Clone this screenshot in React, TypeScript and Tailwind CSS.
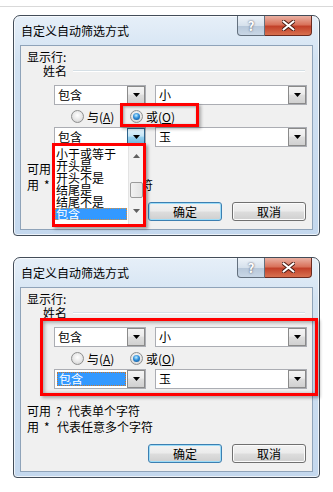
import type { ReactNode } from "react";

function Arrow({ color = "#000" }: { color?: string }) {
  return (
    <svg width="7" height="4" viewBox="0 0 7 4">
      <path d="M0 0h7L3.5 4z" fill={color} />
    </svg>
  );
}

function Combo({
  text,
  className,
  pressed = false,
  selected = false,
}: {
  text: string;
  className: string;
  pressed?: boolean;
  selected?: boolean;
}) {
  return (
    <div className={`flex h-[20px] border border-[#abadb3] bg-white ${className}`}>
      <div className="flex flex-1 items-center py-[2px] pl-[2px] pr-[1px]">
        {selected ? (
          <span className="flex h-full w-full items-center border border-dotted border-[#c9782c] bg-[#3399ff] pl-px text-white">
            {text}
          </span>
        ) : (
          <span className="pl-px">{text}</span>
        )}
      </div>
      <div
        className={
          pressed
            ? "flex w-[18px] items-center justify-center border border-[#2c628b] bg-[linear-gradient(to_bottom,#e5f4fc_0%,#c4e5f6_45%,#98d1ef_50%,#68b3db_100%)]"
            : "flex w-[18px] items-center justify-center border border-[#8a8a8a] bg-[linear-gradient(to_bottom,#f4f4f4_0%,#ececec_45%,#dedede_50%,#d0d0d0_100%)]"
        }
      >
        <Arrow />
      </div>
    </div>
  );
}

function Radio({ checked = false }: { checked?: boolean }) {
  return (
    <span className="flex h-[13px] w-[13px] shrink-0 items-center justify-center rounded-full border border-[#8e8f8f] bg-[radial-gradient(circle_at_50%_40%,#ffffff,#e6e6e6_55%,#c6c6c6)]">
      {checked && (
        <span className="h-[7px] w-[7px] rounded-full bg-[radial-gradient(circle_at_45%_35%,#c2f0ff,#2f8edb_45%,#0b457f)]" />
      )}
    </span>
  );
}

function WinButton({ children, primary = false }: { children: ReactNode; primary?: boolean }) {
  return (
    <div
      className={`flex h-[19px] w-[74px] items-center justify-center rounded-[3px] border bg-[linear-gradient(to_bottom,#f2f2f2_0%,#ebebeb_48%,#dddddd_52%,#cfcfcf_100%)] ${
        primary
          ? "border-[#3c7fb1] shadow-[inset_0_0_0_1px_#9cdcf8]"
          : "border-[#707070] shadow-[inset_0_0_0_1px_#fbfbfb]"
      }`}
    >
      {children}
    </div>
  );
}

const listItems = ["小于或等于", "开头是", "开头不是", "结尾是", "结尾不是", "包含"];

function DropList() {
  return (
    <div className="absolute left-[38px] top-[127px] flex h-[84px] w-[94px] border-[3px] border-[#ff0000] bg-white shadow-[2px_2px_3px_rgba(0,0,0,0.35)]">
      <div className="flex flex-1 flex-col overflow-hidden pt-[2px] pr-px">
        {listItems.map((item, i) =>
          i === listItems.length - 1 ? (
            <div
              key={item}
              className="h-[12px] shrink-0 border border-dotted border-[#d9903a] bg-[#3399ff] leading-[10px] text-white"
            >
              {item}
            </div>
          ) : (
            <div key={item} className="h-[12px] shrink-0 pl-px">
              {item}
            </div>
          ),
        )}
      </div>
      <div className="flex w-[15px] flex-col items-center border-l border-[#e3e3e3] bg-[#f2f2f2]">
        <div className="mt-[8px] rotate-180">
          <Arrow color="#606060" />
        </div>
        <div className="mt-[24px] h-[16px] w-[13px] rounded-[2px] border border-[#9b9b9b] bg-[linear-gradient(to_right,#f2f2f2,#e2e2e2)]" />
        <div className="mt-[11px]">
          <Arrow color="#606060" />
        </div>
      </div>
    </div>
  );
}

function Dialog({ variant }: { variant: 1 | 2 }) {
  return (
    <div className="relative flex h-[221px] w-[307px] flex-col rounded-t-[7px] rounded-b-[4px] border border-[#434d59] bg-[linear-gradient(to_bottom,#e6eff8_0%,#d2e2f2_20%,#c4d8ee_100%)] shadow-[inset_0_0_0_1px_rgba(255,255,255,0.7)]">
      <div className="flex h-[29px] shrink-0 items-start">
        <span className="pl-[7px] pt-[9px]">自定义自动筛选方式</span>
        <div className="ml-auto mr-[7px] flex">
          <div className="flex h-[20px] w-[28px] items-center justify-center rounded-bl-[4px] border border-t-0 border-[#63707e] bg-[linear-gradient(to_bottom,#eef3f9_0%,#d6e1ec_50%,#b8c8da_55%,#c9d7e6_100%)] text-[13px] font-bold text-white [text-shadow:0_0_2px_#334]">
            ?
          </div>
          <div className="flex h-[20px] w-[47px] items-center justify-center rounded-br-[4px] border border-l-0 border-t-0 border-[#6b2a1f] bg-[linear-gradient(to_bottom,#eab1a3_0%,#d9735c_45%,#c2412a_55%,#d8704f_100%)]">
            <svg width="13" height="11" viewBox="0 0 13 11">
              <path
                d="M1.5 1.5l10 8M11.5 1.5l-10 8"
                stroke="#4a1a12"
                strokeWidth="4"
                strokeLinecap="round"
              />
              <path d="M1.5 1.5l10 8M11.5 1.5l-10 8" stroke="#ffffff" strokeWidth="2.2" strokeLinecap="round" />
            </svg>
          </div>
        </div>
      </div>

      <div className="mx-[6px] mb-[5px] flex flex-1 flex-col border border-[#8fa3b9] bg-[#f0f0f0]">
        <div className="ml-[6px] mt-[5px] h-[12px]">显示行:</div>
        <div className="ml-[22px] mr-[7px] mt-[2px] flex h-[12px] items-center gap-[6px]">
          <span>姓名</span>
          <div className="h-[2px] flex-1 border-t border-b border-t-[#d5dfe5] border-b-white" />
        </div>
        <div className="ml-[33px] mt-[8px] flex gap-[9px]">
          <Combo text="包含" className="w-[92px]" />
          <Combo text="小" className="w-[152px]" />
        </div>
        <div className="ml-[50px] mt-[5px] flex h-[13px] items-center">
          <div className="flex w-[59px] items-center gap-[3px]">
            <Radio />
            <span>
              与(<span className="underline">A</span>)
            </span>
          </div>
          <div className="flex items-center gap-[3px]">
            <Radio checked />
            <span>
              或(<span className="underline">O</span>)
            </span>
          </div>
        </div>
        <div className="ml-[33px] mt-[4px] flex gap-[9px]">
          <Combo text="包含" className="w-[92px]" pressed={variant === 1} selected={variant === 2} />
          <Combo text="玉" className="w-[152px]" />
        </div>
        <div className="ml-[6px] mt-[16px] flex h-[12px]">
          <span>可用</span>
          <span className="ml-[5px] w-[7px]">?</span>
          <span className="ml-[5px]">代表单个字符</span>
        </div>
        <div className="ml-[6px] mt-[4px] flex h-[12px]">
          <span>用</span>
          <span className="ml-[5px] w-[7px]">*</span>
          <span className="ml-[6px]">代表任意多个字符</span>
        </div>
        <div className="ml-[127px] mt-[11px] flex gap-[10px]">
          <WinButton primary>确定</WinButton>
          <WinButton>取消</WinButton>
        </div>
      </div>

      {variant === 1 ? (
        <>
          <div className="absolute left-[106px] top-[87px] h-[24px] w-[79px] border-[3px] border-[#ff0000] shadow-[inset_1px_1px_3px_rgba(0,0,0,0.35),2px_2px_3px_rgba(0,0,0,0.3)]" />
          <DropList />
        </>
      ) : (
        <div className="absolute left-[26px] top-[60px] h-[78px] w-[278px] border-[3px] border-[#ff0000] shadow-[inset_1px_1px_4px_rgba(0,0,0,0.4),2px_2px_3px_rgba(0,0,0,0.3)]" />
      )}
    </div>
  );
}

export default function App() {
  return (
    <div className="min-h-[492px] w-[333px] bg-white font-['Noto_Sans_CJK_SC',sans-serif] text-[12px] leading-[12px] text-black">
      <div className="h-[7px] border-b border-[#d9d9d9]" />
      <div className="flex flex-col gap-[21px] pl-[13px] pt-[8px]">
        <Dialog variant={1} />
        <Dialog variant={2} />
      </div>
    </div>
  );
}
